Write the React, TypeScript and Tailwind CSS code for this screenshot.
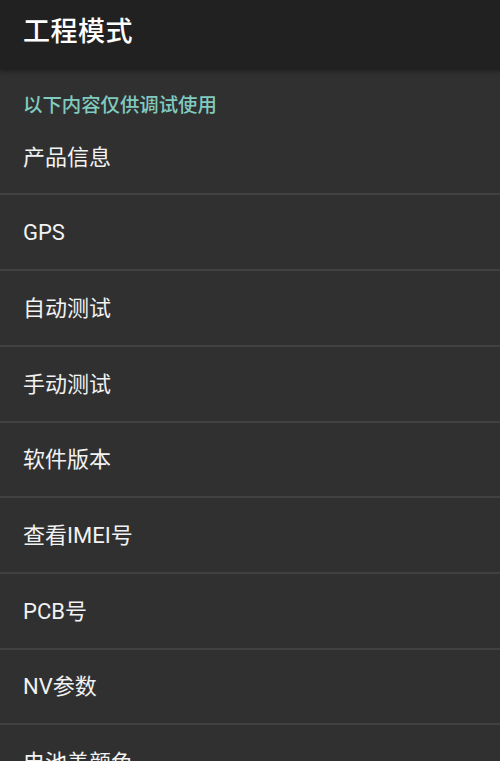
import React from "react";

const items = [
  "产品信息",
  "GPS",
  "自动测试",
  "手动测试",
  "软件版本",
  "查看IMEI号",
  "PCB号",
  "NV参数",
  "电池盖颜色",
];

export default function App() {
  return (
    <div
      className="w-[500px] h-[761px] overflow-hidden bg-[#303030]"
      style={{ fontFamily: '"Roboto", "Noto Sans CJK SC", sans-serif' }}
    >
      <div className="h-[70px] bg-[#212121] flex items-center px-[23px] shadow-[0_2px_4px_rgba(0,0,0,0.3)] relative z-10">
        <span className="text-[27px] font-medium text-white leading-none tracking-[0.5px] -mt-[6px]">工程模式</span>
      </div>
      <div className="h-[49.8px] px-[23px] pt-[24px]">
        <div className="text-[19.4px] leading-[24px] font-medium text-[#80cbc0]">以下内容仅供调试使用</div>
      </div>
      <div className="flex flex-col">
        {items.map((t) => (
          <div
            key={t}
            className="h-[75.7px] shrink-0 border-b-2 border-[#414141] flex items-center px-[23px] pt-[2px]"
          >
            <span className="text-[22px] text-[#f2f2f2] leading-none">{t}</span>
          </div>
        ))}
      </div>
    </div>
  );
}
